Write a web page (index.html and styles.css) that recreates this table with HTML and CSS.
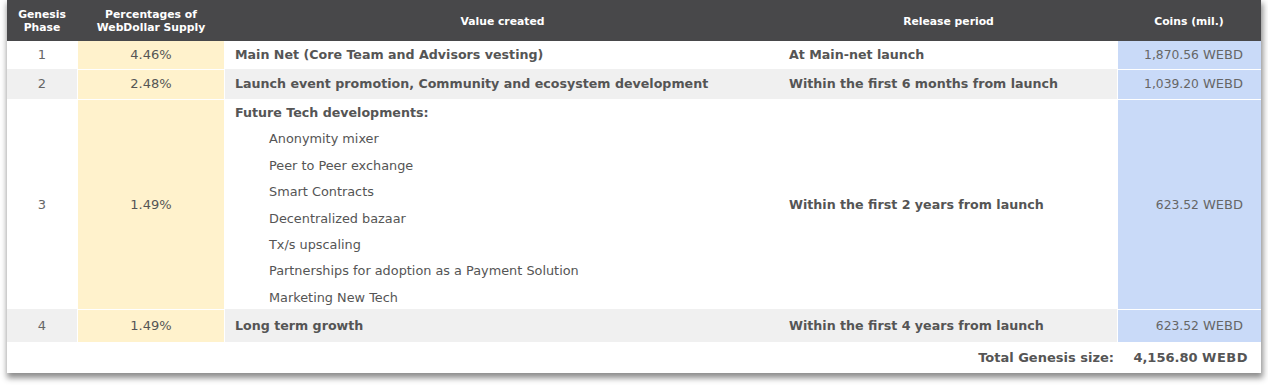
FILE: index.html
```html
<!DOCTYPE html>
<html>
<head>
<meta charset="utf-8">
<link rel="stylesheet" href="styles.css">
</head>
<body>
<div class="wrap">
<table class="genesis">
  <colgroup>
    <col class="c-phase"><col class="c-pct"><col class="c-value"><col class="c-release"><col class="c-coins">
  </colgroup>
  <thead>
    <tr>
      <th>Genesis<br>Phase</th>
      <th>Percentages of<br>WebDollar Supply</th>
      <th>Value created</th>
      <th>Release period</th>
      <th>Coins (mil.)</th>
    </tr>
  </thead>
  <tbody>
    <tr class="r1">
      <td class="phase">1</td>
      <td class="pct">4.46%</td>
      <td class="value">Main Net (Core Team and Advisors vesting)</td>
      <td class="release">At Main-net launch</td>
      <td class="coins"><span class="num">1,870.56</span> <span class="unit">WEBD</span></td>
    </tr>
    <tr class="r2 alt">
      <td class="phase">2</td>
      <td class="pct">2.48%</td>
      <td class="value">Launch event promotion, Community and ecosystem development</td>
      <td class="release">Within the first 6 months from launch</td>
      <td class="coins"><span class="num">1,039.20</span> <span class="unit">WEBD</span></td>
    </tr>
    <tr class="r3">
      <td class="phase">3</td>
      <td class="pct">1.49%</td>
      <td class="value list">
        <div class="lhead">Future Tech developments:</div>
        <ul>
          <li>Anonymity mixer</li>
          <li>Peer to Peer exchange</li>
          <li>Smart Contracts</li>
          <li>Decentralized bazaar</li>
          <li>Tx/s upscaling</li>
          <li>Partnerships for adoption as a Payment Solution</li>
          <li class="last">Marketing New Tech</li>
        </ul>
      </td>
      <td class="release">Within the first 2 years from launch</td>
      <td class="coins"><span class="num">623.52</span> <span class="unit">WEBD</span></td>
    </tr>
    <tr class="r4 alt">
      <td class="phase">4</td>
      <td class="pct">1.49%</td>
      <td class="value">Long term growth</td>
      <td class="release">Within the first 4 years from launch</td>
      <td class="coins"><span class="num">623.52</span> <span class="unit">WEBD</span></td>
    </tr>
  </tbody>
  <tfoot>
    <tr class="total">
      <td colspan="4" class="tlabel">Total Genesis size:</td>
      <td class="tvalue">4,156.80 <span class="tunit">WEBD</span></td>
    </tr>
  </tfoot>
</table>
</div>
</body>
</html>
```

FILE: styles.css
```css
html, body {
  margin: 0;
  padding: 0;
  background: #ffffff;
}
.wrap {
  padding: 0 7px 13px 7px;
}
.genesis {
  width: 1254px;
  table-layout: fixed;
  border-collapse: separate;
  border-spacing: 0;
  font-family: "DejaVu Sans", Verdana, sans-serif;
  font-size: 13px;
  line-height: 16px;
  color: #555555;
  background: #ffffff;
  box-shadow: 1px 4px 6px 1px rgba(0, 0, 0, 0.45);
}
.c-phase { width: 70px; }
.c-pct { width: 148px; }
.c-value { width: 555px; }
.c-release { width: 337px; }
.c-coins { width: 144px; }

.genesis th {
  background: #48484a;
  color: #ffffff;
  font-size: 10.8px;
  font-weight: bold;
  line-height: 13px;
  height: 40px;
  padding: 1px 0 0 0;
  text-align: center;
  vertical-align: middle;
}
.genesis td {
  padding: 0;
  border: none;
  vertical-align: middle;
}
.r1 td { height: 28px; }
.r2 td { height: 30px; }
.genesis .r3 td { height: 208px; padding-top: 2px; }
.r4 td { height: 33px; }
.total td { height: 31px; }

.alt td { background: #f0f0f0; }

.phase {
  text-align: center;
  color: #666666;
}
.genesis td.pct {
  background: #fff2cc;
  text-align: center;
  box-shadow: inset 1px 1px 0 #ffffff, inset -1px 0 0 #ffffff;
}
.genesis .r1 td.pct {
  box-shadow: inset 1px 0 0 #ffffff, inset -1px 0 0 #ffffff;
}
.genesis td.value {
  font-weight: bold;
  font-size: 12.65px;
  padding-left: 10px;
}
.genesis .r3 td.list {
  font-weight: normal;
  font-size: 12.85px;
  vertical-align: top;
  line-height: 26.4px;
  padding-top: 1px;
}
.lhead {
  font-weight: bold;
  font-size: 12.65px;
}
.value ul {
  list-style: none;
  margin: 0;
  padding: 0 0 0 34px;
}
.value li.last {
  line-height: 20px;
  padding-top: 3px;
}
.genesis td.release {
  font-weight: bold;
  font-size: 12.65px;
  padding-left: 9px;
}
.genesis td.coins {
  background: #c9daf8;
  text-align: right;
  padding-right: 18px;
  box-shadow: inset 1px 1px 0 #ffffff;
  color: #666666;
}
.genesis .r1 td.coins {
  box-shadow: inset 1px 0 0 #ffffff;
}
.num {
  font-size: 12.3px;
}
.unit {
  font-size: 13px;
}
.genesis td.tlabel {
  text-align: right;
  font-weight: bold;
  padding-right: 3px;
}
.genesis td.tvalue {
  text-align: right;
  font-weight: bold;
  padding-right: 13px;
  color: #555555;
}
.tunit {
  letter-spacing: 0.5px;
}
```
